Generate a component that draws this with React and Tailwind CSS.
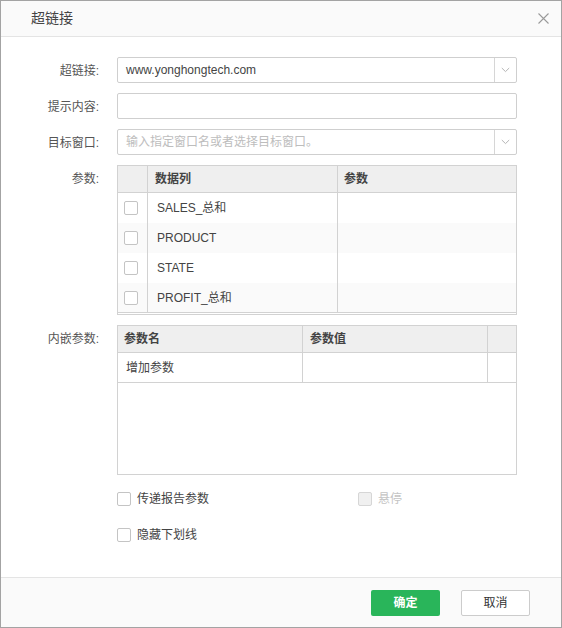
const font = "font-['Liberation_Sans','Noto_Sans_CJK_SC',sans-serif]";

function Chevron() {
  return (
    <svg width="9" height="6" viewBox="0 0 9 6" aria-hidden="true">
      <path d="M0.8 1 L4.5 4.6 L8.2 1" fill="none" stroke="#b5b5b5" strokeWidth="1" />
    </svg>
  );
}

function Box({ disabled = false }) {
  return (
    <span
      className={`block h-[14px] w-[14px] rounded-[2px] border ${
        disabled ? "border-[#d6d6d6] bg-[#f0f0f0]" : "border-[#c4c4c4] bg-white"
      }`}
    />
  );
}

function Row({ label, children }) {
  return (
    <div className="flex">
      <div className="w-[98px] shrink-0 pt-[7px] text-right text-[12px] leading-[14px] text-[#555]">{label}</div>
      <div className="ml-[18px] w-[400px]">{children}</div>
    </div>
  );
}

function SelectInput({ value, placeholder }) {
  return (
    <div className="flex h-[26px] rounded-[2px] border border-[#cfcfcf] bg-white">
      <div
        className={`flex flex-1 items-center pl-[8px] text-[12px] ${
          value ? "text-[#444]" : "text-[#bdbdbd]"
        }`}
      >
        {value || placeholder}
      </div>
      <div className="flex w-[22px] items-center justify-center border-l border-[#d6d6d6]">
        <Chevron />
      </div>
    </div>
  );
}

const columns = ["SALES_总和", "PRODUCT", "STATE", "PROFIT_总和"];

export default function App() {
  return (
    <div className={`${font} flex h-[628px] w-[562px] flex-col border border-[#a3a3a3] bg-white`}>
      <div className="flex h-[36px] shrink-0 items-center justify-between border-b border-[#e4e4e4] bg-[#fafafa] pl-[30px] pr-[12px]">
        <span className="text-[14px] text-[#444]">超链接</span>
        <svg width="11" height="11" viewBox="0 0 11 11" aria-hidden="true">
          <path d="M0.5 0.5 L10.5 10.5 M10.5 0.5 L0.5 10.5" stroke="#9a9a9a" strokeWidth="1.1" />
        </svg>
      </div>

      <div className="flex flex-1 flex-col gap-[10px] pt-[20px]">
        <Row label="超链接:">
          <SelectInput value="www.yonghongtech.com" />
        </Row>
        <Row label="提示内容:">
          <div className="h-[26px] rounded-[2px] border border-[#cfcfcf] bg-white" />
        </Row>
        <Row label="目标窗口:">
          <SelectInput placeholder="输入指定窗口名或者选择目标窗口。" />
        </Row>

        <Row label="参数:">
          <div className="h-[150px] border border-[#d2d2d2] text-[12px] text-[#444]">
            <div className="flex h-[27px] border-b border-[#d2d2d2] bg-[#efefef] font-bold text-[#444]">
              <div className="w-[30px] border-r border-[#d2d2d2]" />
              <div className="flex w-[190px] items-center border-r border-[#d2d2d2] pl-[7px]">数据列</div>
              <div className="flex flex-1 items-center pl-[6px]">参数</div>
            </div>
            {columns.map((c, i) => (
              <div
                key={c}
                className={`flex h-[30px] ${i % 2 ? "bg-[#fafafa]" : "bg-white"} ${
                  i === columns.length - 1 ? "h-[29px] border-b border-[#d2d2d2]" : ""
                }`}
              >
                <div className="flex w-[30px] items-center border-r border-[#d2d2d2] pl-[6px]">
                  <Box />
                </div>
                <div className="flex w-[190px] items-center border-r border-[#d2d2d2] pl-[9px]">{c}</div>
                <div className="flex-1" />
              </div>
            ))}
          </div>
        </Row>

        <Row label="内嵌参数:">
          <div className="h-[150px] border border-[#d2d2d2] text-[12px] text-[#444]">
            <div className="flex h-[27px] border-b border-[#d2d2d2] bg-[#efefef] font-bold">
              <div className="flex w-[185px] items-center border-r border-[#d2d2d2] pl-[6px]">参数名</div>
              <div className="flex w-[185px] items-center border-r border-[#d2d2d2] pl-[7px]">参数值</div>
              <div className="flex-1" />
            </div>
            <div className="flex h-[30px] border-b border-[#d2d2d2]">
              <div className="flex w-[185px] items-center border-r border-[#d2d2d2] pl-[8px]">增加参数</div>
              <div className="w-[185px] border-r border-[#d2d2d2]" />
              <div className="flex-1" />
            </div>
          </div>
        </Row>

        <div className="ml-[116px] mt-[4px] flex flex-col gap-[16px] text-[12px]">
          <div className="flex h-[20px] items-center">
            <label className="flex w-[241px] items-center gap-[6px] text-[#444]">
              <Box />
              传递报告参数
            </label>
            <label className="flex items-center gap-[6px] text-[#c4c4c4]">
              <Box disabled />
              悬停
            </label>
          </div>
          <div className="flex h-[20px] items-center">
            <label className="flex items-center gap-[6px] text-[#444]">
              <Box />
              隐藏下划线
            </label>
          </div>
        </div>
      </div>

      <div className="flex h-[50px] shrink-0 items-start justify-end gap-[21px] border-t border-[#e4e4e4] bg-[#fafafa] pr-[31px] pt-[12px]">
        <button className="h-[26px] w-[69px] rounded-[2px] bg-[#29b55a] text-[12px] font-bold text-white">确定</button>
        <button className="h-[26px] w-[69px] rounded-[2px] border border-[#cccccc] bg-white text-[12px] text-[#333]">
          取消
        </button>
      </div>
    </div>
  );
}
